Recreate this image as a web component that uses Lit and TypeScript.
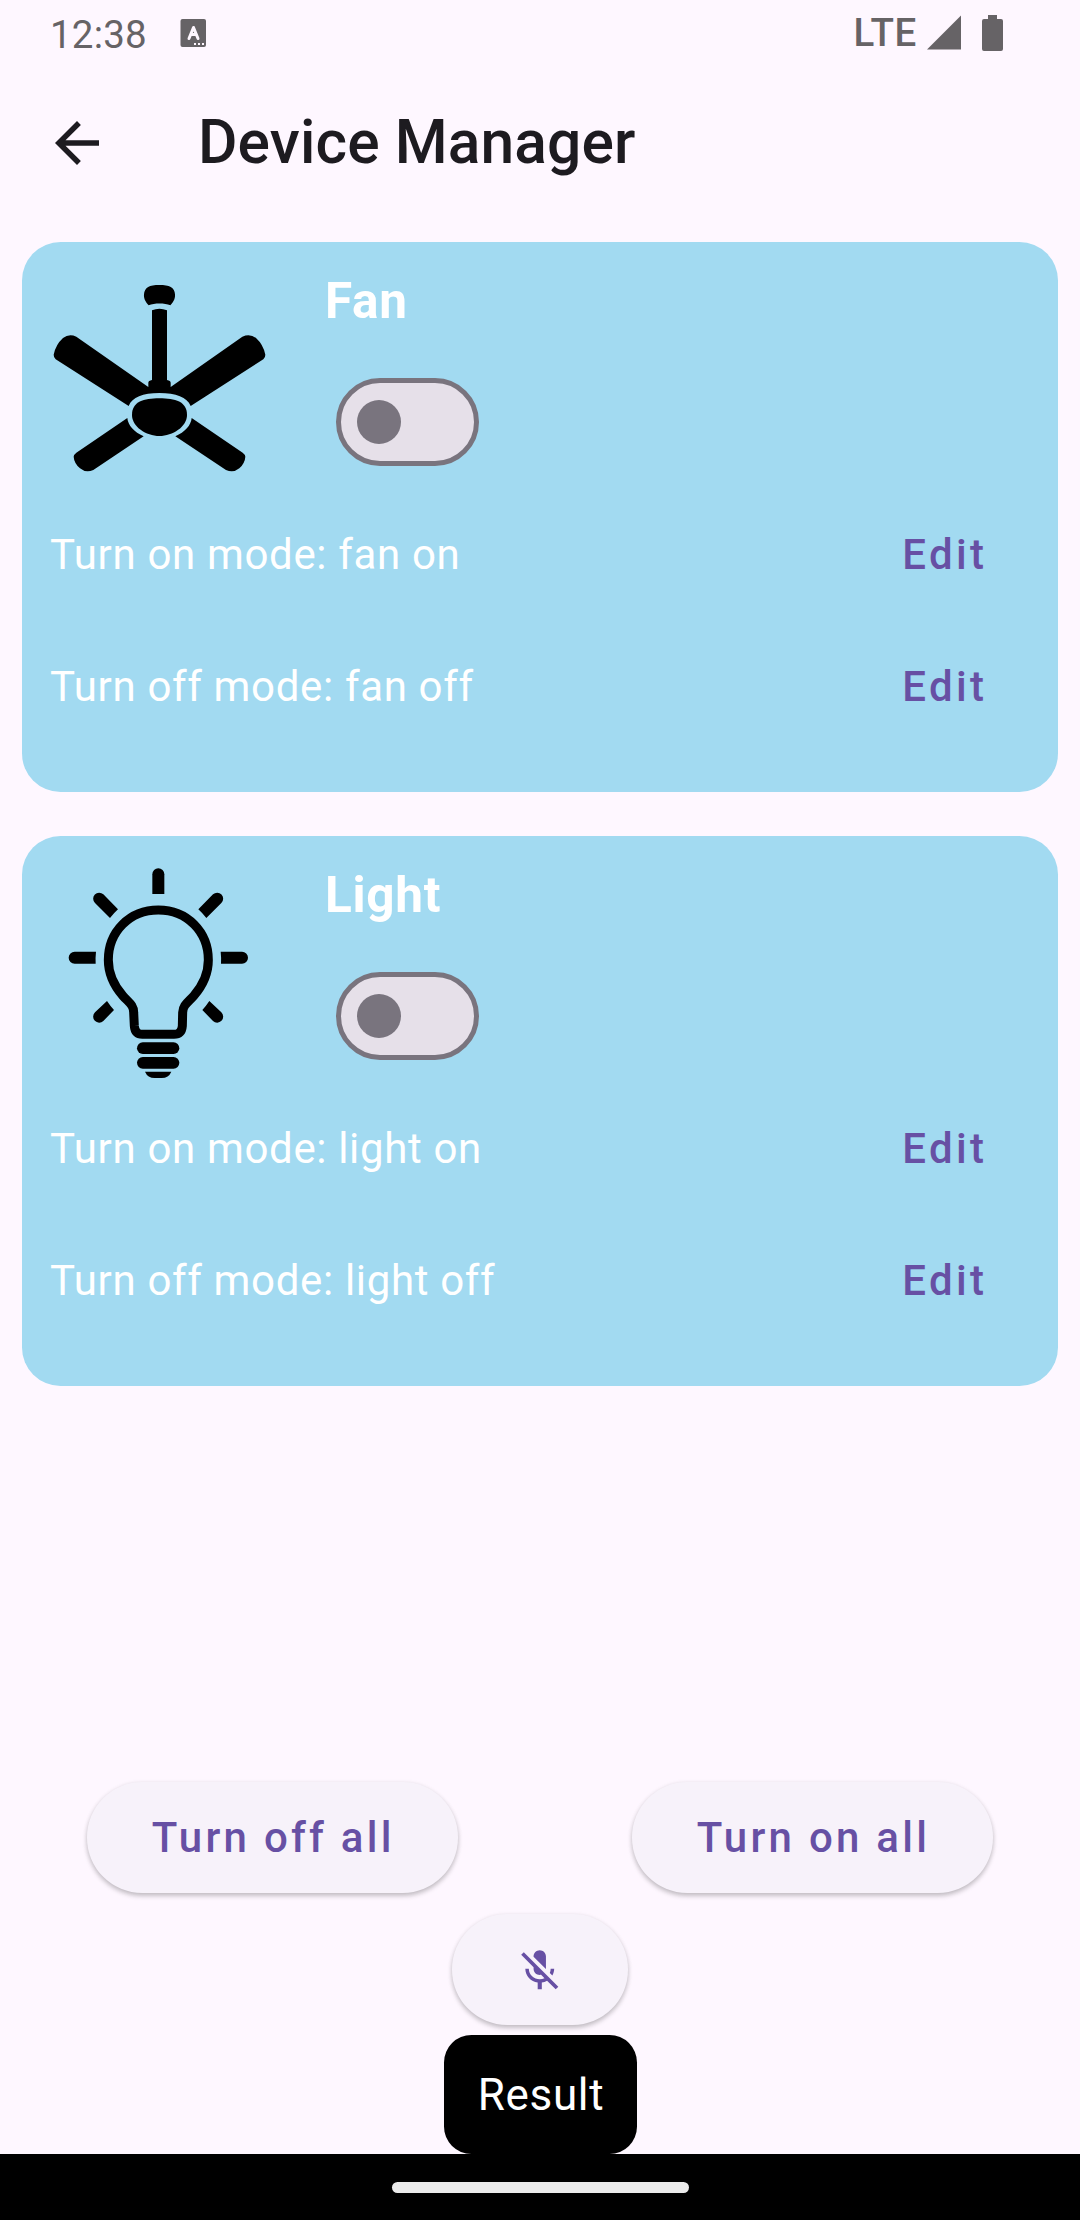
import { LitElement, html, svg, css } from "lit";
import { customElement, property } from "lit/decorators.js";

interface Device {
  name: string;
  icon: "fan" | "light";
  onMode: string;
  offMode: string;
}

const DEVICES: Device[] = [
  { name: "Fan", icon: "fan", onMode: "fan on", offMode: "fan off" },
  { name: "Light", icon: "light", onMode: "light on", offMode: "light off" },
];

const fanShapes = svg`
  <path d="M356 136C344 124 341 112 342 103C344 82 358 75 388 75C418 75 434 82 435 103C436 112 433 124 421 136C404 129 373 129 356 136Z"/>
  <path d="M366 151Q388 142 411 151V360Q422 362 422 368V381L637 230Q660 220 678 234Q700 254 706 284Q706 293 700 298L482 438C471 411 438 399 388 399C338 399 307 411 296 438L77 298Q71 293 71 284Q77 254 99 234Q117 220 139 230L355 381V368Q355 362 366 360Z"/>
  <path d="M388 415C436 415 471 425 471 465C471 500 428 528 388 528C348 528 306 500 306 465C306 425 341 415 388 415Z"/>
  <path d="M292 474C294 496 312 516 341 529L190 630Q168 640 150 625Q132 609 131 590Q131 584 139 578Z"/>
  <path d="M485 474C483 496 465 516 436 529L588 630Q610 640 628 625Q645 609 646 590Q646 584 638 578Z"/>`;

const lightShapes = svg`
  <path d="M337 132V73a18 18 0 0 1 36 0V132Z"/>
  <path d="M168 305H104a18 18 0 0 0 0 36H167Q166 322 168 305Z"/>
  <path d="M542 305H606a18 18 0 0 1 0 36H543Q544 322 542 305Z"/>
  <path d="M234 178L190 133A18 18 0 0 0 165 159L210 204Q221 190 234 178Z"/>
  <path d="M475 178L519 133A18 18 0 0 1 544 159L499 204Q488 190 475 178Z"/>
  <path d="M201 453L165 487A18 18 0 0 0 190 513L222 480Q211 468 201 453Z"/>
  <path d="M508 453L544 487A18 18 0 0 1 519 513L487 480Q498 468 508 453Z"/>
  <path fill="none" stroke="#000" stroke-width="27" d="M355 180C269 180 205 245 205 330C205 372 222 407 249 438C267 458 281 465 281 487L283 528Q285 553 307 553H402Q425 553 427 528L428 487C429 465 443 458 461 438C488 407 505 372 505 330C505 245 441 180 355 180Z"/>
  <rect x="291" y="577" width="127" height="35" rx="17.500"/>
  <rect x="291" y="621" width="127" height="35" rx="17.500"/>
  <path d="M315 665H394Q386 684 365 684H344Q323 684 315 665Z"/>`;

@customElement("status-bar")
class StatusBar extends LitElement {
  static styles = css`
    :host {
      display: flex;
      align-items: flex-start;
      height: 66px;
      box-sizing: border-box;
      padding: 0 76px 0 50px;
      color: #666366;
      fill: #666366;
      font-size: 38.5px;
      line-height: 45px;
    }
    .time { width: 130px; padding-top: 12px; letter-spacing: 0.2px; }
    .app { width: 27px; height: 29px; margin-top: 19px; }
    .network { margin-left: auto; padding-top: 10px; font-weight: 500; letter-spacing: 0.7px; }
    .signal { width: 35px; height: 36px; margin: 15px 0 0 10px; }
    .battery { width: 22px; height: 37px; margin: 15px 0 0 20px; }
  `;
  render() {
    return html`
      <span class="time">12:38</span>
      <svg class="app" viewBox="0 0 27 29">
        <rect x=".5" y="0" width="25.500" height="28" rx="2" />
        <path d="M9 19.500L13.500 8.500L18 19.500M11 15.500H16" fill="none" stroke="#fef7ff" stroke-width="3" stroke-linecap="round" stroke-linejoin="round" />
        <path d="M14 24h2v2h-2zM18 24h2v2h-2zM22 24h2v2h-2z" fill="#fef7ff" />
      </svg>
      <span class="network">LTE</span>
      <svg class="signal" viewBox="0 0 35 36"><path d="M0 34.500L34 .5V34.500Z" /></svg>
      <svg class="battery" viewBox="0 0 22 37">
        <path d="M6 0h9v4h4q2 0 2 2v28q0 2-2 2H2q-2 0-2-2V6q0-2 2-2h4z" />
      </svg>
    `;
  }
}

@customElement("device-card")
class DeviceCard extends LitElement {
  static styles = css`
    :host {
      display: block;
      height: 550px;
      box-sizing: border-box;
      border-radius: 38.5px;
      background: #a2daf1;
      color: #fff;
    }
    .head { display: flex; height: 246px; }
    .picture { width: 302px; box-sizing: border-box; padding: 18px 0 0 8px; }
    .picture svg { display: block; width: 260px; height: 240px; }
    .name { margin: 0; padding: 30px 0 0 1px; font-size: 49.5px; line-height: 58px; font-weight: 700; letter-spacing: 0.7px; }
    .switch {
      display: flex;
      align-items: center;
      width: 143px;
      height: 88px;
      box-sizing: border-box;
      margin: 48px 0 0 11.5px;
      padding: 0 16.5px;
      border: 5.5px solid #79747e;
      border-radius: 44px;
      background: #e6e0e9;
    }
    .thumb { width: 44px; height: 44px; border-radius: 50%; background: #79747e; }
    .row {
      display: flex;
      align-items: center;
      justify-content: space-between;
      height: 132px;
      padding: 0 70.5px 0 28px;
      font-size: 42px;
      letter-spacing: 0.66px;
    }
    .edit { color: #6750a4; font-weight: 500; letter-spacing: 3.4px; }
  `;
  @property({ attribute: false }) device!: Device;
  render() {
    const d = this.device;
    const fan = d.icon === "fan";
    return html`
      <div class="head">
        <div class="picture">
          <svg viewBox=${fan ? "0 0 780 720" : "-30 12 780 720"}>${fan ? fanShapes : lightShapes}</svg>
        </div>
        <div>
          <h2 class="name">${d.name}</h2>
          <div class="switch" role="switch" aria-checked="false"><span class="thumb"></span></div>
        </div>
      </div>
      <div class="row"><span>Turn on mode: ${d.onMode}</span><span class="edit">Edit</span></div>
      <div class="row"><span>Turn off mode: ${d.offMode}</span><span class="edit">Edit</span></div>
    `;
  }
}

@customElement("app-root")
class AppRoot extends LitElement {
  static styles = css`
    :host {
      display: flex;
      flex-direction: column;
      width: 1080px;
      height: 2220px;
      overflow: hidden;
      background: #fef7ff;
      color: #1d1b20;
      font-family: Roboto, "Liberation Sans", sans-serif;
    }
    .bar { display: flex; align-items: center; height: 154px; padding: 0 44px; }
    .back { width: 66px; height: 66px; fill: #1d1b20; }
    .title { margin: 0 0 2px 88px; font-size: 60.5px; line-height: 77px; font-weight: 500; letter-spacing: 0.12px; }
    .list { display: flex; flex-direction: column; gap: 44px; padding: 22px 22px 0; }
    .bottom { display: flex; flex-direction: column; align-items: center; margin-top: auto; }
    .pair { display: flex; justify-content: space-around; width: 100%; }
    .button {
      display: flex;
      align-items: center;
      height: 110.5px;
      box-sizing: border-box;
      padding-left: 65px;
      border-radius: 55.25px;
      background: #f7f2fa;
      color: #6750a4;
      font-size: 42px;
      font-weight: 500;
      letter-spacing: 3.25px;
      white-space: nowrap;
      box-shadow: 0 3px 5px rgba(0, 0, 0, 0.2), 0 1px 5px rgba(0, 0, 0, 0.08);
    }
    .off { width: 371.5px; }
    .on { width: 361.5px; }
    .mic { justify-content: center; width: 176.5px; margin-top: 21.5px; padding: 0; }
    .mic svg { width: 49.5px; height: 49.5px; margin-top: 3px; fill: #6750a4; }
    .result {
      display: flex;
      align-items: center;
      justify-content: center;
      width: 193px;
      height: 119px;
      box-sizing: border-box;
      margin-top: 10.5px;
      padding-left: 2px;
      border-radius: 27.5px;
      background: #000;
      color: #fff;
      font-size: 44px;
      letter-spacing: 0.7px;
    }
    .nav { display: flex; align-items: center; justify-content: center; height: 66px; background: #000; }
    .pill { width: 297px; height: 11px; border-radius: 5.5px; background: #ebebeb; }
  `;
  render() {
    return html`
      <status-bar></status-bar>
      <header class="bar">
        <svg class="back" viewBox="0 0 24 24"><path d="M20 11H7.83l5.590-5.590L12 4l-8 8 8 8 1.410-1.410L7.830 13H20z" /></svg>
        <h1 class="title">Device Manager</h1>
      </header>
      <main class="list">${DEVICES.map((d) => html`<device-card .device=${d}></device-card>`)}</main>
      <section class="bottom">
        <div class="pair">
          <div class="button off">Turn off all</div>
          <div class="button on">Turn on all</div>
        </div>
        <div class="button mic">
          <svg viewBox="0 0 24 24">
            <path d="M19 11h-1.700c0 .74-.16 1.430-.43 2.050l1.230 1.230c.56-.98.9-2.090.9-3.280zm-4.020.17c0-.06.02-.11.02-.17V5c0-1.660-1.340-3-3-3S9 3.340 9 5v.18l5.980 5.990zM4.270 3L3 4.270l6.010 6.010V11c0 1.660 1.330 3 2.990 3 .22 0 .44-.03.65-.08l1.660 1.660c-.71.33-1.500.52-2.310.52-2.760 0-5.300-2.100-5.300-5.100H5c0 3.410 2.720 6.230 6 6.720V21h2v-3.280c.91-.13 1.770-.45 2.540-.9L19.730 21 21 19.730 4.270 3z" />
          </svg>
        </div>
        <div class="result">Result</div>
      </section>
      <footer class="nav"><div class="pill"></div></footer>
    `;
  }
}
